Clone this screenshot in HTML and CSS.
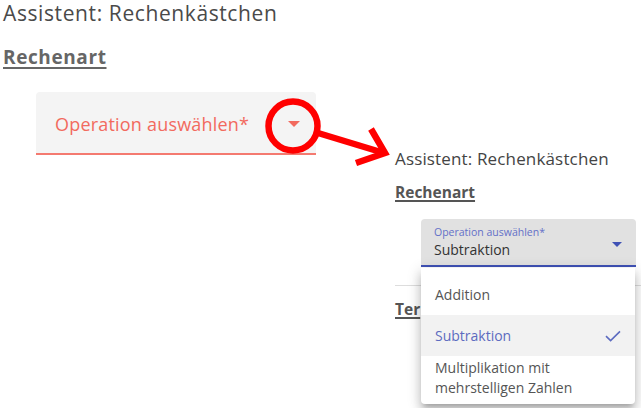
FILE: index.html
```html
<!DOCTYPE html>
<html lang="de">
<head>
<meta charset="utf-8">
<link rel="stylesheet" href="styles.css">
</head>
<body>
<div class="page">
  <section class="left">
    <h1 class="title">Assistent: Rechenkästchen</h1>
    <h2 class="section">Rechenart</h2>
    <div class="field field-error">
      <span class="field-label">Operation auswählen*</span>
      <span class="caret caret-red"></span>
    </div>
  </section>
  <section class="right">
    <h1 class="title-sm">Assistent: Rechenkästchen</h1>
    <h2 class="section-sm">Rechenart</h2>
    <div class="field-sm">
      <span class="float-label">Operation auswählen*</span>
      <span class="value">Subtraktion</span>
      <span class="caret caret-blue"></span>
    </div>
    <hr class="divider">
    <h2 class="section-sm section-under">Ter</h2>
    <ul class="menu">
      <li class="option">Addition</li>
      <li class="option selected">Subtraktion
        <svg class="check" width="16" height="12" viewBox="0 0 16 12"><path d="M1 6.2 L5.6 10.6 L15 1.4" fill="none" stroke="#5c6bc0" stroke-width="1.6"/></svg>
      </li>
      <li class="option multi">Multiplikation mit mehrstelligen Zahlen</li>
    </ul>
  </section>
</div>
<svg class="annotation" width="641" height="408" viewBox="0 0 641 408">
  <circle cx="293" cy="126" r="24.5" fill="none" stroke="#ff0000" stroke-width="6.5"/>
  <path d="M318 133 L384 153" stroke="#ff0000" stroke-width="6.5" fill="none"/>
  <path d="M371 129 L385 153 L356 163" stroke="#ff0000" stroke-width="6.5" fill="none" stroke-linecap="butt" stroke-linejoin="miter"/>
</svg>
</body>
</html>
```
FILE: styles.css
```css
html, body { margin: 0; padding: 0; background: #fff; }
body { width: 641px; height: 408px; overflow: hidden; position: relative; font-family: "Open Sans", "Noto Sans", sans-serif; }
.page { display: flex; }
.left { width: 392px; padding-left: 3px; }
.title { margin: 0; font-size: 21px; font-weight: 400; color: #4a4a4a; line-height: 26px; letter-spacing: 0.6px; }
.section { margin: 19px 0 0; font-size: 19px; font-weight: 700; color: #666; line-height: 24px; letter-spacing: 0.6px; text-decoration: underline; text-decoration-thickness: 2px; text-underline-offset: 3px; }
.field { margin: 23px 0 0 33px; width: 280px; height: 63px; background: #f4f4f4; border-radius: 4px 4px 0 0; border-bottom: 2px solid #f47a70; display: flex; align-items: center; justify-content: space-between; padding: 3px 16px 0 19px; box-sizing: border-box; }
.field-label { font-size: 18px; color: #f26a5e; letter-spacing: 0.2px; }
.caret { width: 0; height: 0; border-left: 6px solid transparent; border-right: 6px solid transparent; }
.caret-red { border-top: 6px solid #f26a5e; margin-top: -1px; }
.right { position: relative; width: 246px; padding-top: 148px; }
.title-sm { margin: 0; font-size: 17px; font-weight: 400; color: #444; line-height: 22px; letter-spacing: 0.15px; }
.section-sm { margin: 12px 0 0; font-size: 15.5px; font-weight: 700; color: #555; line-height: 20px; text-decoration: underline; text-decoration-thickness: 1.5px; text-underline-offset: 2px; }
.field-sm { margin: 17px 5px 0 26px; height: 48px; background: #e1e1e1; border-radius: 4px 4px 0 0; border-bottom: 2px solid #3f51b5; position: relative; padding: 7px 0 0 13px; box-sizing: border-box; display: flex; flex-direction: column; }
.float-label { font-size: 10.5px; color: #6370c8; line-height: 12px; }
.value { font-size: 14px; color: #333; line-height: 20px; margin-top: 2px; }
.caret-blue { position: absolute; right: 14px; top: 23px; border-left-width: 5px; border-right-width: 5px; border-top: 5px solid #3f51b5; }
.divider { margin: 18px 0 0; border: 0; border-top: 1px solid #ddd; }
.section-under { margin-top: 13px; }
.menu { position: absolute; left: 26px; top: 268px; width: 214px; height: 136px; margin: 0; padding: 6px 0 0; box-sizing: border-box; list-style: none; background: #fff; border-radius: 0 0 4px 4px; box-shadow: 0 5px 5px -3px rgba(0,0,0,.2), 0 8px 10px 1px rgba(0,0,0,.14), 0 3px 14px 2px rgba(0,0,0,.12); }
.option { height: 41px; display: flex; align-items: center; justify-content: space-between; padding: 0 14px 0 14px; font-size: 14px; color: #555; }
.selected { background: #f2f2f2; color: #5c6bc0; }
.multi { height: auto; padding-top: 2px; line-height: 20px; display: block; padding-right: 60px; }
.annotation { position: absolute; left: 0; top: 0; pointer-events: none; }
```
